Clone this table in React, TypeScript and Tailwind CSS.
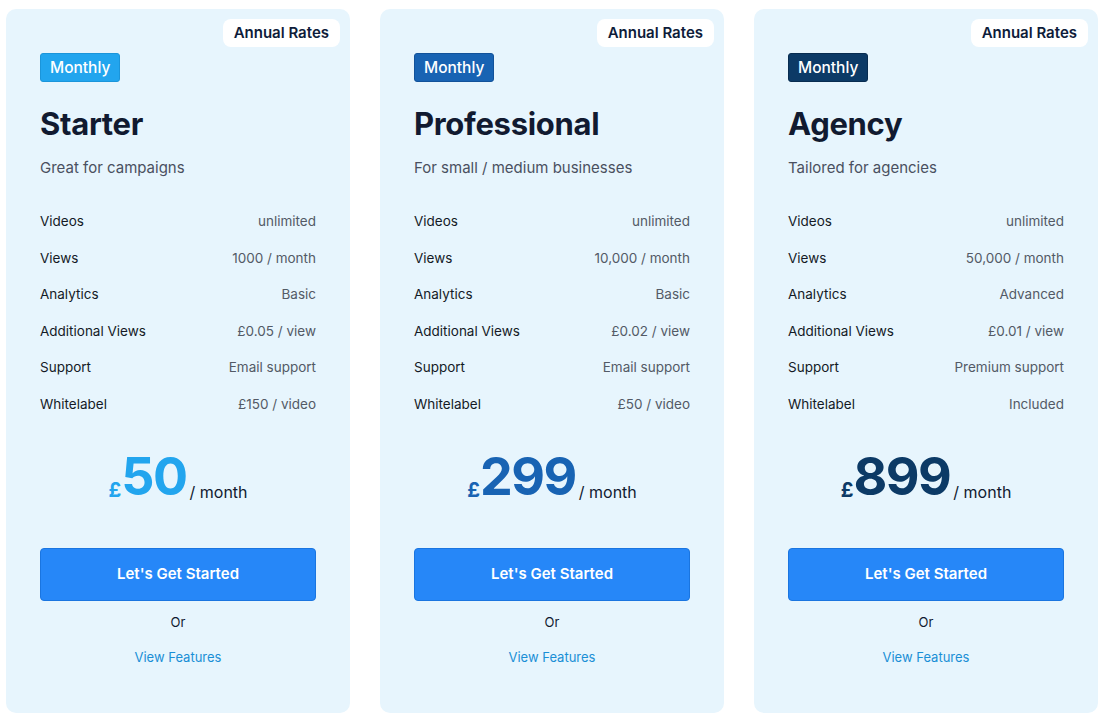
import React from "react";

type Plan = {
  name: string;
  subtitle: string;
  badge: string;
  priceColor: string;
  price: string;
  rows: [string, string][];
};

const plans: Plan[] = [
  {
    name: "Starter",
    subtitle: "Great for campaigns",
    badge: "bg-[#22a5ee] border-[#1b95da]",
    priceColor: "text-[#22a5ee]",
    price: "50",
    rows: [
      ["Videos", "unlimited"],
      ["Views", "1000 / month"],
      ["Analytics", "Basic"],
      ["Additional Views", "£0.05 / view"],
      ["Support", "Email support"],
      ["Whitelabel", "£150 / video"],
    ],
  },
  {
    name: "Professional",
    subtitle: "For small / medium businesses",
    badge: "bg-[#1863b3] border-[#12529a]",
    priceColor: "text-[#1863b3]",
    price: "299",
    rows: [
      ["Videos", "unlimited"],
      ["Views", "10,000 / month"],
      ["Analytics", "Basic"],
      ["Additional Views", "£0.02 / view"],
      ["Support", "Email support"],
      ["Whitelabel", "£50 / video"],
    ],
  },
  {
    name: "Agency",
    subtitle: "Tailored for agencies",
    badge: "bg-[#0c3a66] border-[#082c50]",
    priceColor: "text-[#0c3a66]",
    price: "899",
    rows: [
      ["Videos", "unlimited"],
      ["Views", "50,000 / month"],
      ["Analytics", "Advanced"],
      ["Additional Views", "£0.01 / view"],
      ["Support", "Premium support"],
      ["Whitelabel", "Included"],
    ],
  },
];

function Card({ p }: { p: Plan }) {
  return (
    <div className="relative w-[344px] h-[704px] shrink-0 rounded-[10px] bg-[#e7f5fd] px-[34px] pt-[44px]">
      <div className="absolute top-[10px] right-[10px] h-[28px] px-[11px] rounded-[8px] bg-white flex items-center text-[15px] font-semibold text-[#0e1c3a]">
        Annual Rates
      </div>
      <div className="flex">
        <div className={`h-[29px] px-[9px] rounded-[3px] border flex items-center text-white text-[15.5px] font-medium ${p.badge}`}>
          Monthly
        </div>
      </div>
      <div className="mt-[22px] h-[40px] flex items-center text-[31px] font-bold tracking-[-0.3px] text-[#111a30]">
        {p.name}
      </div>
      <div className="mt-[12px] h-[24px] flex items-center text-[15px] text-[#4a5060]">
        {p.subtitle}
      </div>
      <div className="mt-[23px] flex flex-col">
        {p.rows.map(([k, v]) => (
          <div key={k} className="h-[36.5px] flex items-center justify-between text-[13.5px]">
            <span className="text-[#141a26]">{k}</span>
            <span className="text-[#535a66]">{v}</span>
          </div>
        ))}
      </div>
      <div className="mt-[25px] h-[56px] flex items-end justify-center">
        <span className={`text-[20px] font-bold leading-none mb-[3px] ${p.priceColor}`}>£</span>
        <span className={`text-[52px] font-bold leading-none tracking-[-1.5px] ${p.priceColor}`}>{p.price}</span>
        <span className="text-[16px] leading-none mb-[3px] ml-[3px] text-[#111a30]">/ month</span>
      </div>
      <div className="mt-[45px] h-[53px] rounded-[4px] bg-[#2687f8] border border-[#1a75e0] flex items-center justify-center text-white text-[15px] font-semibold">
        Let's Get Started
      </div>
      <div className="mt-[12px] h-[20px] flex items-center justify-center text-[13px] text-[#111a30]">Or</div>
      <div className="mt-[15px] h-[20px] flex items-center justify-center text-[13px] text-[#1a8fd6]">View Features</div>
    </div>
  );
}

export default function App() {
  return (
    <div
      className="w-[1108px] h-[723px] bg-white flex gap-[30px] pl-[6px] pt-[9px]"
      style={{ fontFamily: "Inter, 'Noto Sans', sans-serif" }}
    >
      {plans.map((p) => (
        <Card key={p.name} p={p} />
      ))}
    </div>
  );
}
